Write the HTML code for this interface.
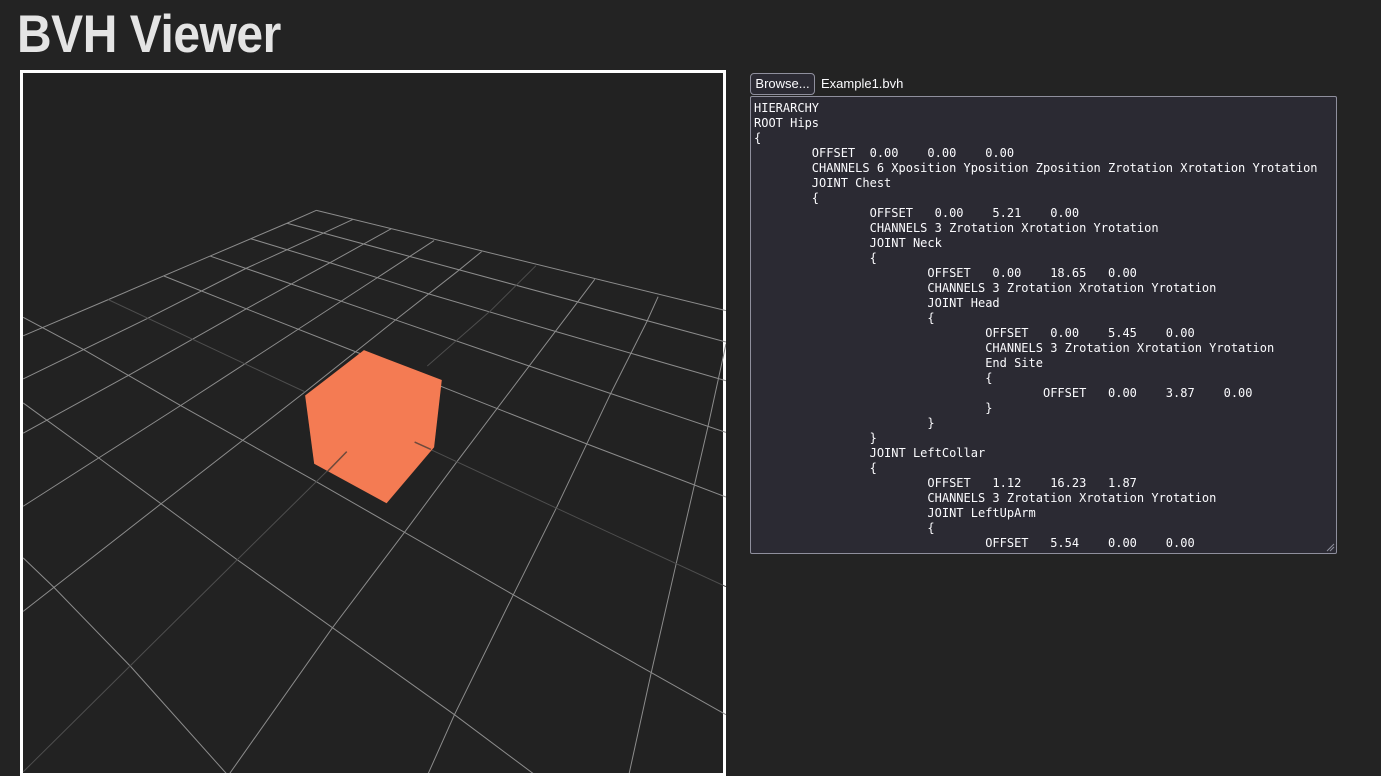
<!DOCTYPE html>
<html><head><meta charset="utf-8"><style>
html,body{margin:0;padding:0;background:#232323;width:1381px;height:776px;overflow:hidden;font-family:"Liberation Sans",sans-serif;color:#e6e6e6}
h1{position:absolute;left:17px;top:4px;margin:0;font-size:53px;font-weight:bold;color:#e4e4e4;transform:scaleX(0.905);transform-origin:0 0;line-height:62px;letter-spacing:-0.5px}
#cv{position:absolute;left:20px;top:70px;width:700px;height:700px;border:3px solid #fff;background:#222}
#btn{position:absolute;left:750px;top:73px;width:63px;height:20px;border:1px solid #8f8f9d;border-radius:4px;background:#2b2a33;color:#fbfbfe;font-size:13px;line-height:20px;text-align:center}
#fn{position:absolute;left:821px;top:73px;font-size:13px;line-height:21px;color:#fbfbfe}
#ta{position:absolute;left:750px;top:96px;width:585px;height:456px;border:1px solid #8f8f9d;border-radius:2px;background:#2b2a33;overflow:hidden}
#ta pre{margin:0;padding:4px 0 0 3px;font-family:"DejaVu Sans Mono",monospace;font-size:12px;line-height:15px;color:#fbfbfe}
</style></head><body>
<h1>BVH Viewer</h1>
<div id="cv"></div>
<svg style="position:absolute;left:20px;top:200px" width="706" height="573" viewBox="0 0 1560 1553" preserveAspectRatio="none">
<g fill="none" stroke="#8c8c8c" stroke-width="1">
<polyline vector-effect="non-scaling-stroke" points="655,28 1560,300"/>
<polyline vector-effect="non-scaling-stroke" points="590,63 1560,385"/>
<polyline vector-effect="non-scaling-stroke" points="510,105 685,170 905,255 1180,355 1560,490"/>
<polyline vector-effect="non-scaling-stroke" points="420,152 600,228 830,325 1125,450 1560,630"/>
<polyline vector-effect="non-scaling-stroke" points="318,206 500,295 745,413 930,505 1250,660 1560,805"/>
<polyline vector-effect="non-scaling-stroke" points="7,318 140,405 355,557 650,760 1090,1070 1560,1395"/>
<polyline vector-effect="non-scaling-stroke" points="7,550 175,700 480,975 960,1395 1140,1560"/>
<polyline vector-effect="non-scaling-stroke" points="7,970 75,1050 245,1265 460,1560"/>
<polyline vector-effect="non-scaling-stroke" points="7,368 195,270 420,152 590,63 655,28"/>
<polyline vector-effect="non-scaling-stroke" points="7,485 280,322 500,185 670,90 735,53"/>
<polyline vector-effect="non-scaling-stroke" points="7,632 240,475 500,295 685,170 820,78"/>
<polyline vector-effect="non-scaling-stroke" points="7,830 355,557 615,350 790,210 915,110"/>
<polyline vector-effect="non-scaling-stroke" points="7,1115 310,825 630,520 830,325 965,195 1020,140"/>
<polyline vector-effect="non-scaling-stroke" points="460,1560 690,1160 850,900 965,710 1125,450 1230,280 1270,215"/>
<polyline vector-effect="non-scaling-stroke" points="900,1560 960,1395 1090,1070 1185,835 1305,525 1385,330 1410,262"/>
<polyline vector-effect="non-scaling-stroke" points="1345,1560 1395,1280 1450,985 1520,615 1560,390"/>
</g>
<g fill="none" stroke="#4e4e4e" stroke-width="1">
<polyline vector-effect="non-scaling-stroke" points="195,270 495,443 630,520"/>
<polyline vector-effect="non-scaling-stroke" points="870,655 1185,835 1560,1048"/>
<polyline vector-effect="non-scaling-stroke" points="7,1550 480,975 722,682"/>
<polyline vector-effect="non-scaling-stroke" points="1140,178 1040,300 900,450"/>
</g>
<polygon points="760,407 932,488 915,670 810,822 650,715 630,530" fill="#f47b53"/>
<g stroke="#6e4a3c" stroke-width="1.5" fill="none">
<line vector-effect="non-scaling-stroke" x1="722" y1="682" x2="680" y2="735"/>
<line vector-effect="non-scaling-stroke" x1="872" y1="656" x2="908" y2="676"/>
</g>
</svg>
<div id="btn">Browse...</div>
<div id="fn">Example1.bvh</div>
<div id="ta"><pre>HIERARCHY
ROOT Hips
{
        OFFSET  0.00    0.00    0.00
        CHANNELS 6 Xposition Yposition Zposition Zrotation Xrotation Yrotation
        JOINT Chest
        {
                OFFSET   0.00    5.21    0.00
                CHANNELS 3 Zrotation Xrotation Yrotation
                JOINT Neck
                {
                        OFFSET   0.00    18.65   0.00
                        CHANNELS 3 Zrotation Xrotation Yrotation
                        JOINT Head
                        {
                                OFFSET   0.00    5.45    0.00
                                CHANNELS 3 Zrotation Xrotation Yrotation
                                End Site
                                {
                                        OFFSET   0.00    3.87    0.00
                                }
                        }
                }
                JOINT LeftCollar
                {
                        OFFSET   1.12    16.23   1.87
                        CHANNELS 3 Zrotation Xrotation Yrotation
                        JOINT LeftUpArm
                        {
                                OFFSET   5.54    0.00    0.00
</pre>
<svg style="position:absolute;right:1px;bottom:1px" width="10" height="10"><g stroke="#8f8f9d"><line x1="9" y1="2" x2="2" y2="9"/><line x1="9" y1="5" x2="5" y2="9"/></g></svg>
</div>
</body></html>
